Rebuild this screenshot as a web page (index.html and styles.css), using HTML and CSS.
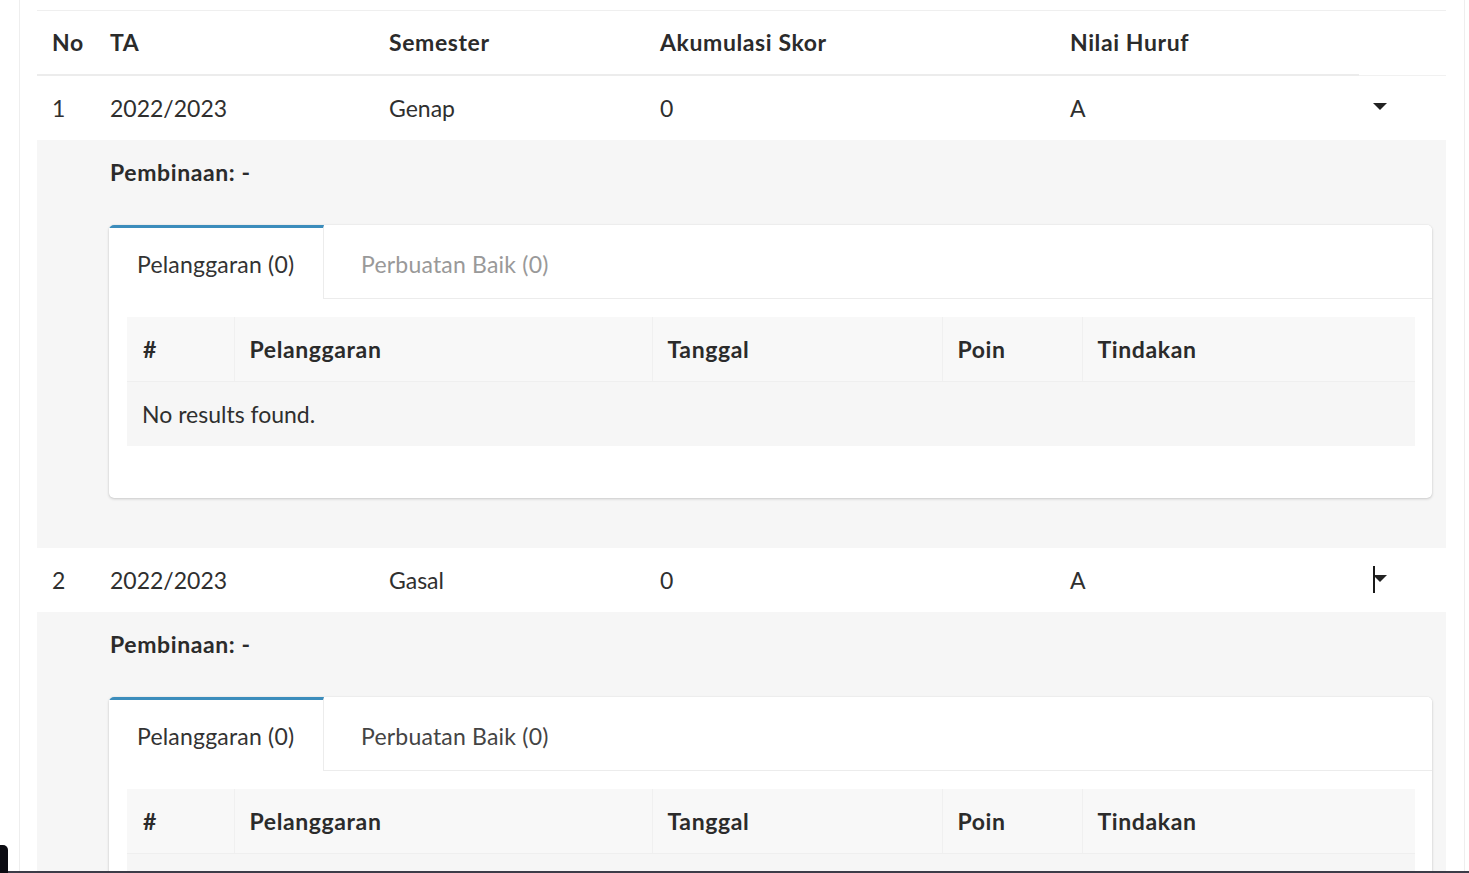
FILE: index.html
```html
<!DOCTYPE html>
<html lang="id">
<head>
<meta charset="utf-8">
<title>Rekap Skor</title>
<link rel="stylesheet" href="styles.css">
</head>
<body>
<div class="page">
  <div class="card-outer">
    <table class="main-table">
      <colgroup>
        <col class="c-no"><col class="c-ta"><col class="c-sem"><col class="c-skor"><col class="c-nilai"><col class="c-act">
      </colgroup>
      <thead>
        <tr>
          <th>No</th><th>TA</th><th>Semester</th><th>Akumulasi Skor</th><th>Nilai Huruf</th><th class="th-act"></th>
        </tr>
      </thead>
      <tbody>
        <tr class="row">
          <td>1</td><td>2022/2023</td><td>Genap</td><td>0</td><td>A</td><td class="act"><span class="caret"></span></td>
        </tr>
        <tr class="detail">
          <td colspan="6">
            <p class="pembinaan">Pembinaan: -</p>
            <div class="tab-card">
              <div class="tabs">
                <span class="tab active">Pelanggaran (0)</span>
                <span class="tab">Perbuatan Baik (0)</span>
              </div>
              <div class="tab-body">
                <table class="inner-table">
                  <colgroup><col class="i-no"><col class="i-pel"><col class="i-tgl"><col class="i-poin"><col class="i-tin"></colgroup>
                  <thead><tr><th>#</th><th>Pelanggaran</th><th>Tanggal</th><th>Poin</th><th>Tindakan</th></tr></thead>
                  <tbody><tr><td colspan="5">No results found.</td></tr></tbody>
                </table>
              </div>
            </div>
          </td>
        </tr>
        <tr class="row">
          <td>2</td><td>2022/2023</td><td>Gasal</td><td>0</td><td>A</td><td class="act"><span class="caret"></span><span class="ibeam"></span></td>
        </tr>
        <tr class="detail">
          <td colspan="6">
            <p class="pembinaan">Pembinaan: -</p>
            <div class="tab-card">
              <div class="tabs">
                <span class="tab active">Pelanggaran (0)</span>
                <span class="tab hover">Perbuatan Baik (0)</span>
              </div>
              <div class="tab-body">
                <table class="inner-table">
                  <colgroup><col class="i-no"><col class="i-pel"><col class="i-tgl"><col class="i-poin"><col class="i-tin"></colgroup>
                  <thead><tr><th>#</th><th>Pelanggaran</th><th>Tanggal</th><th>Poin</th><th>Tindakan</th></tr></thead>
                  <tbody><tr><td colspan="5">No results found.</td></tr></tbody>
                </table>
              </div>
            </div>
          </td>
        </tr>
      </tbody>
    </table>
  </div>
</div>
<div class="taskbar-line"></div>
<div class="taskbar-corner"></div>
</body>
</html>
```
FILE: styles.css
```css
html, body {
  margin: 0;
  padding: 0;
  background: #ffffff;
}
body {
  font-family: "Lato", "Source Sans Pro", "Liberation Sans", sans-serif;
  font-size: 23px;
  line-height: 36px;
  color: #2f2f2f;
}
.page {
  padding-left: 19px;
  width: 1446px;
}
.card-outer {
  border-left: 1px solid #eeeeee;
  border-right: 1px solid #eeeeee;
  padding: 10px 17px 40px 17px;
  min-height: 900px;
}
.main-table {
  width: 1409px;
  table-layout: fixed;
  border-collapse: collapse;
  border-top: 1px solid #efefef;
}
.c-no { width: 58px; }
.c-ta { width: 279px; }
.c-sem { width: 271px; }
.c-skor { width: 410px; }
.c-nilai { width: 304px; }
.c-act { width: 87px; }

.main-table > thead th {
  text-align: left;
  font-weight: 700;
  letter-spacing: 0.6px;
  padding: 13px 15px 14px 15px;
  border-bottom: 2px solid #ececec;
  color: #2b2b2b;
}
.main-table > thead th.th-act {
  border-bottom: 1px solid #f1f1f1;
}
.row td {
  padding: 14px 15px;
  background: #ffffff;
}
.row td.act {
  position: relative;
  padding-left: 14px;
}
.caret {
  display: inline-block;
  width: 0;
  height: 0;
  border-top: 7px solid #222222;
  border-left: 7px solid transparent;
  border-right: 7px solid transparent;
  vertical-align: 7px;
}
.ibeam {
  position: absolute;
  left: 14px;
  top: 18px;
  width: 2px;
  height: 27px;
  background: #1a1a1a;
}
.detail > td {
  background: #f6f6f6;
  padding: 14px 14px 50px 72px;
}
.pembinaan {
  margin: 0 0 35px 1px;
  font-weight: 700;
  letter-spacing: 0.6px;
  color: #2b2b2b;
}
.tab-card {
  background: #ffffff;
  border-radius: 5px;
  box-shadow: 0 0 1px rgba(0,0,0,0.14), 0 1px 3px rgba(0,0,0,0.18);
  overflow: hidden;
}
.tabs {
  display: flex;
  border-bottom: 1px solid #ececec;
  background: #ffffff;
}
.tab {
  display: block;
  border-top: 3px solid transparent;
  padding: 18px 27px 16px 37px;
  color: #999999;
  white-space: nowrap;
  letter-spacing: 0.2px;
}
.tab.active {
  border-top-color: #3c8dbc;
  border-right: 1px solid #ececec;
  padding: 18px 0 16px 28px;
  margin-bottom: -1px;
  color: #333333;
  background: #ffffff;
  width: 186px;
}
.tab.hover {
  color: #444444;
}
.tab-body {
  padding: 18px 17px 52px 18px;
}
.inner-table {
  width: 100%;
  table-layout: fixed;
  border-collapse: collapse;
  background: #f8f8f8;
}
.i-no { width: 107px; }
.i-pel { width: 418px; }
.i-tgl { width: 290px; }
.i-poin { width: 140px; }
.i-tin { width: auto; }
.inner-table th {
  text-align: left;
  font-weight: 700;
  letter-spacing: 0.6px;
  padding: 14px 15px;
  border-left: 1px solid #f0f0f0;
  border-bottom: 1px solid #efefef;
  color: #2b2b2b;
}
.inner-table th:first-child {
  border-left: none;
  padding-left: 16px;
}
.inner-table td {
  padding: 14px 15px;
  background: #f6f6f6;
}
.taskbar-line {
  position: fixed;
  left: 0;
  right: 0;
  bottom: 0;
  height: 2px;
  background: #3c3c48;
}
.taskbar-corner {
  position: fixed;
  left: 0;
  bottom: 0;
  width: 8px;
  height: 28px;
  background: #0b0b12;
  border-top-right-radius: 5px;
}
```
